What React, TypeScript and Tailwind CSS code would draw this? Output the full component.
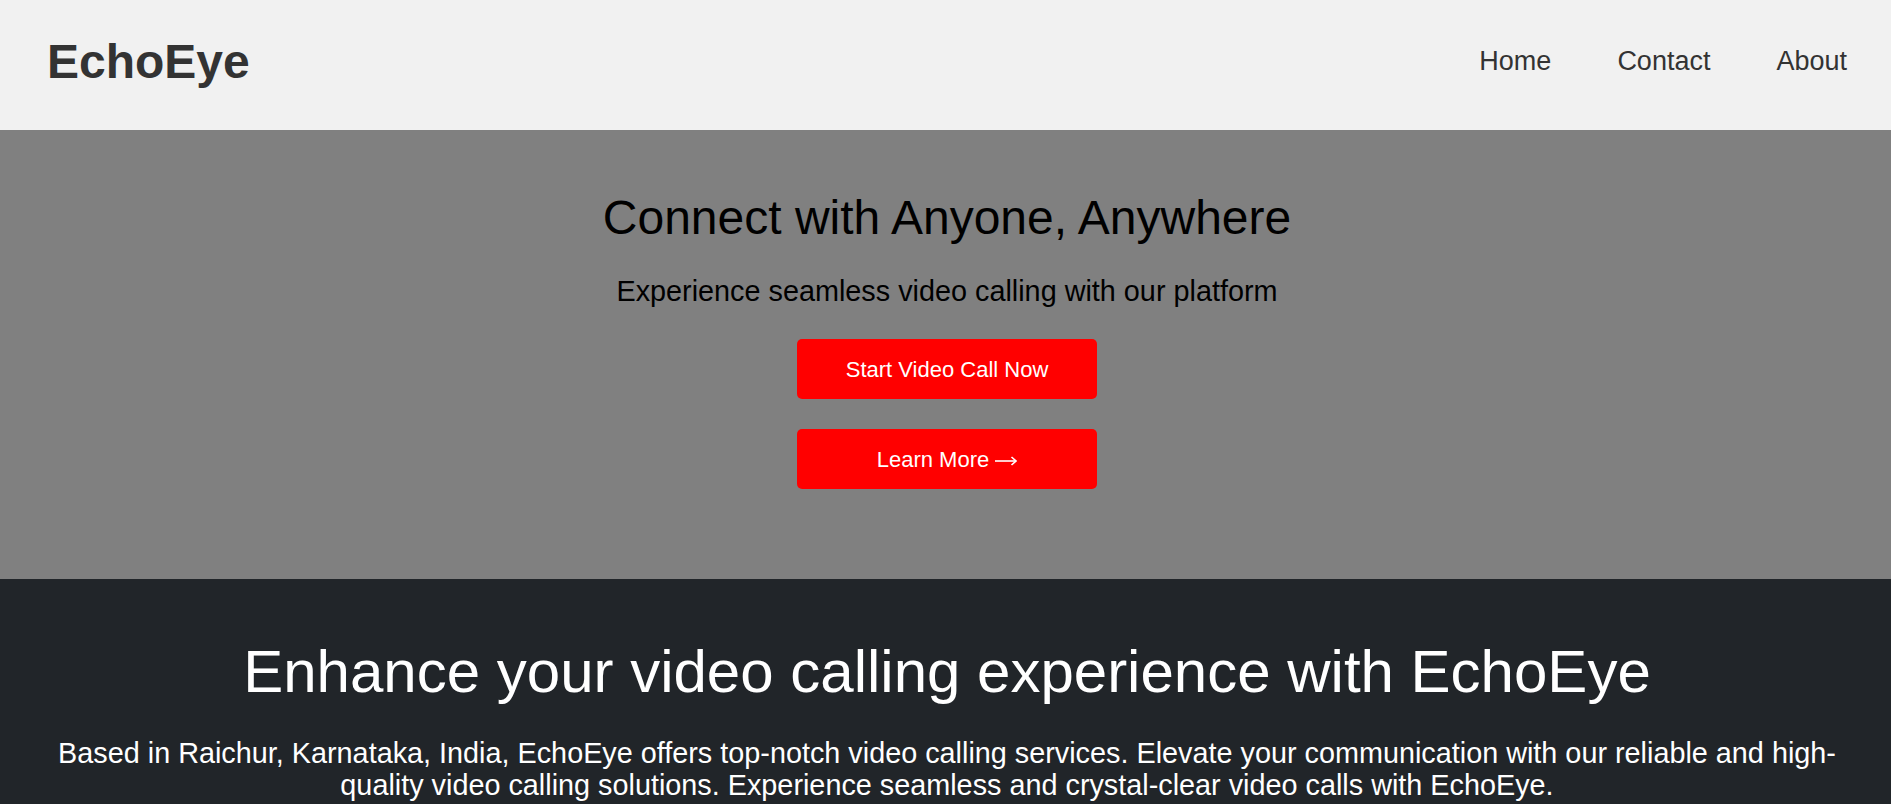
export default function App() {
  return (
    <div className="min-h-screen bg-[#212529] font-['Liberation_Sans',Arial,sans-serif] leading-[1.149]">
      <header className="flex h-[130px] items-center justify-between bg-[#f1f1f1] pb-[6px] pl-[47px] pr-[44px]">
        <h1 className="text-[48px] font-bold text-[#333333]">EchoEye</h1>
        <nav className="flex gap-[66px] text-[27px] text-[#333333]">
          <a href="#">Home</a>
          <a href="#">Contact</a>
          <a href="#">About</a>
        </nav>
      </header>

      <section className="flex flex-col items-center bg-[#808080] pb-[90px] pl-[3px] pt-[60px] text-center">
        <h2 className="text-[48px] text-black">Connect with Anyone, Anywhere</h2>
        <p className="mt-[30px] text-[28.8px] text-black">
          Experience seamless video calling with our platform
        </p>
        <button className="mt-[31px] flex h-[60px] w-[300px] items-center justify-center rounded-[5px] bg-[#ff0000] text-[22px] text-white">
          Start Video Call Now
        </button>
        <button className="mt-[30px] flex h-[60px] w-[300px] items-center justify-center gap-[6px] rounded-[5px] bg-[#ff0000] text-[22px] text-white">
          Learn More
          <svg width="22" height="10" viewBox="0 0 22 10" className="mt-[3px]" fill="none" stroke="white" strokeWidth="1.6">
            <path d="M0 5h20.5" />
            <path d="M16.5 1l4.5 4-4.5 4" />
          </svg>
        </button>
      </section>

      <section className="pb-[60px] pl-[53px] pr-[50px] pt-[59px] text-center text-white">
        <h2 className="text-[60px]">Enhance your video calling experience with EchoEye</h2>
        <p className="mt-[31px] text-[28.8px] leading-[31.5px]">
          Based in Raichur, Karnataka, India, EchoEye offers top-notch video calling services.
          Elevate your communication with our reliable and high-quality video calling solutions.
          Experience seamless and crystal-clear video calls with EchoEye.
        </p>
      </section>
    </div>
  );
}
